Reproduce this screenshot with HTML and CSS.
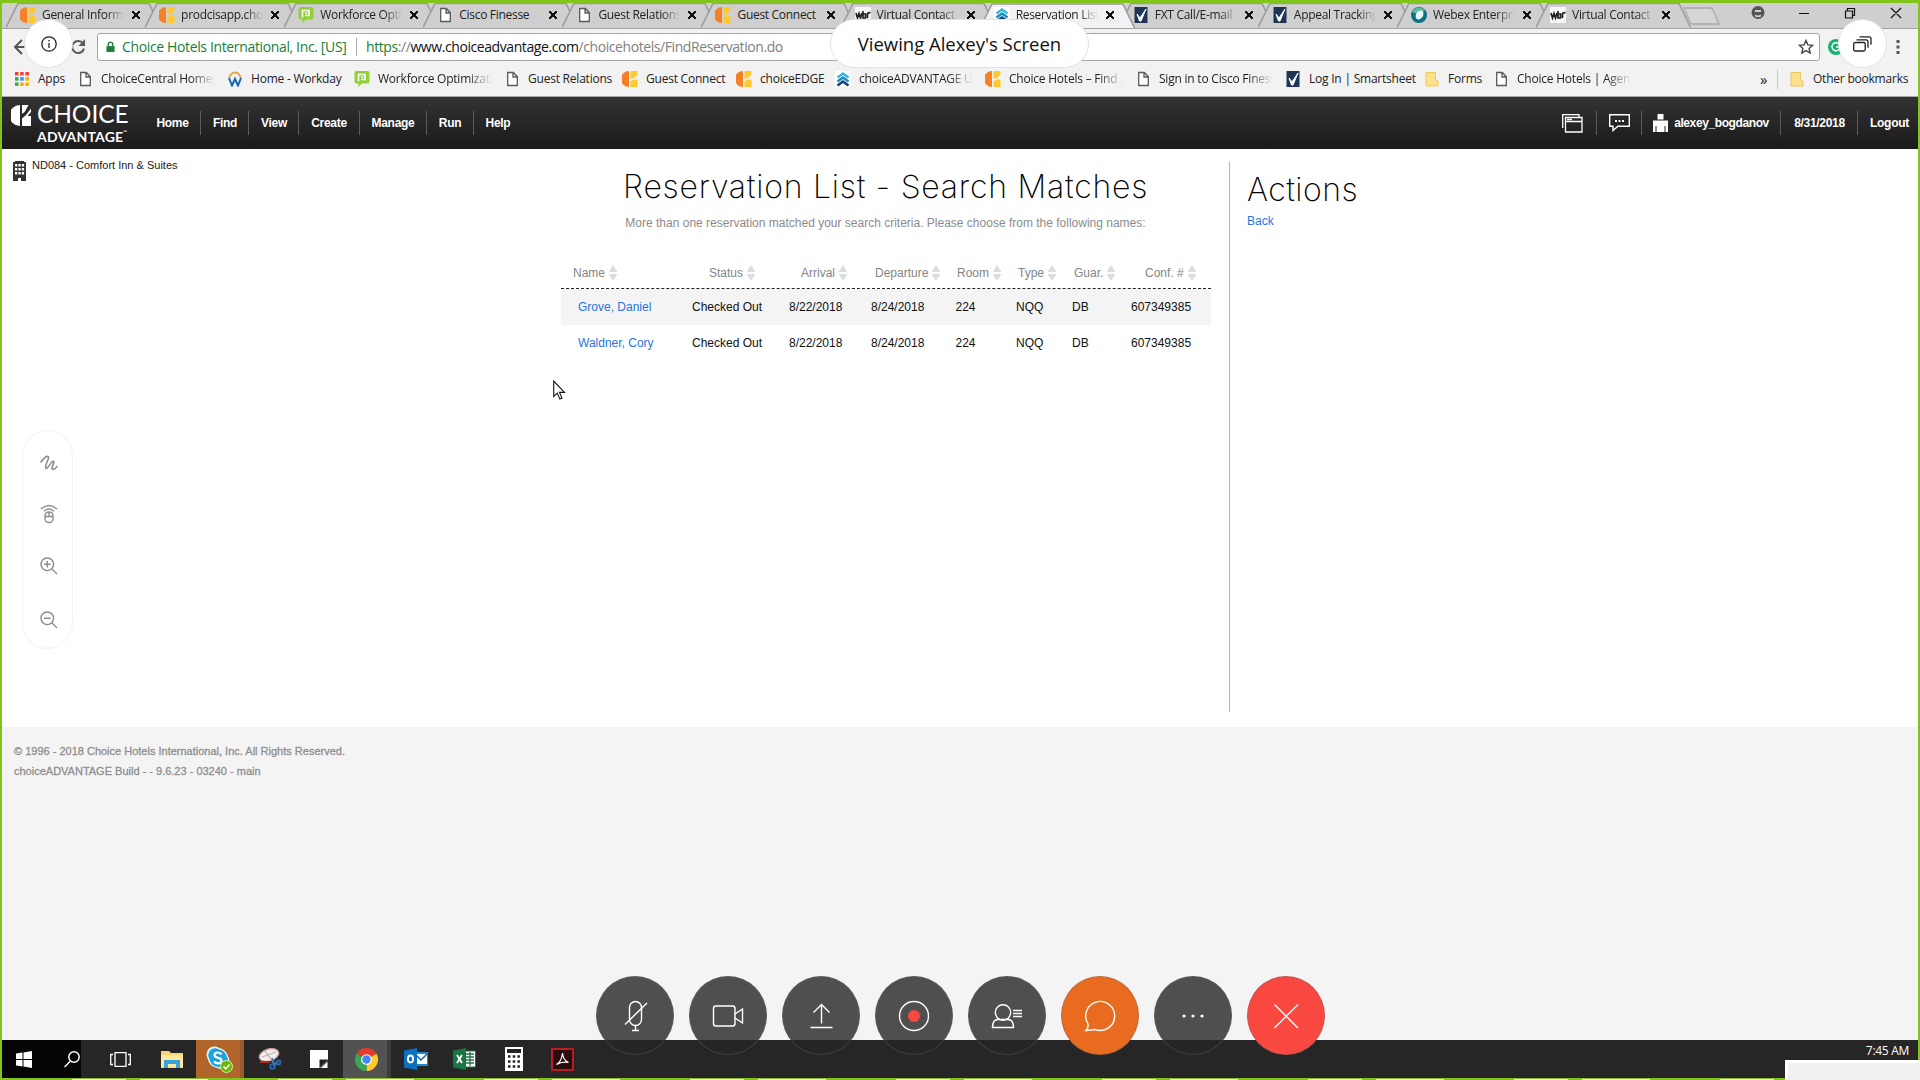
FILE: index.html
```html
<!DOCTYPE html>
<html lang="en">
<head>
<meta charset="utf-8">
<title>Reservation List</title>
<link rel="stylesheet" href="styles.css">
</head>
<body>
<svg class="defs" width="0" height="0" aria-hidden="true">
  <defs>
    <symbol id="choice" viewBox="0 0 16 16"><path d="M7 0A8 8 0 0 0 7 16Z" fill="#f58025"/><path d="M8.500 0H15.500V3.500L11.500 7.500H8.500ZM8.500 10.500 11 8.500H15.500V16H8.500Z" fill="#ffc82e"/></symbol>
    <symbol id="page" viewBox="0 0 16 16"><path d="M3.700 1.500h5.600l4 4v9H3.700ZM9 1.500V6h4.300" fill="#fff" stroke="#5a5a5a" stroke-width="1.300"/></symbol>
    <symbol id="wfo" viewBox="0 0 16 16"><path d="M2.500 0h11Q15.500 0 15.500 2v8.500q0 2-2 2H8L4 16l.5-3.500h-2q-2 0-2-2V2q0-2 2-2Z" fill="#92d038"/><path d="M4.500 10.500V3.500h6.500v5H7" fill="none" stroke="#fff" stroke-width="1.600"/><circle cx="8" cy="6" r="1" fill="#fff"/></symbol>
    <symbol id="wbr" viewBox="0 0 16 16"><path d="M0 0h16v16H0Z" fill="#f6f6f6"/><path d="m1 6 1.500 5L4 6.500 5.500 11 7 6M8 4v7h2.500V7H8M12.500 11V6.500q1-1 3-.8" fill="none" stroke="#222" stroke-width="1.700"/></symbol>
    <symbol id="adv" viewBox="0 0 16 16"><path d="M0 0h16v16H0Z" fill="#fff"/><g fill="none" stroke-width="2.600"><path d="m2.500 6.500 5.500-4 5.500 4" stroke="#36b8df"/><path d="m2.500 10.500 5.500-4 5.500 4" stroke="#178dc6"/><path d="m2.500 14.500 5.500-4 5.500 4" stroke="#193f7a"/></g></symbol>
    <symbol id="smart" viewBox="0 0 16 16"><path d="M1.500 0h13v16h-13Z" fill="#1f3556"/><path d="m4 7 3 4 6-9-5 12-1.500 0Z" fill="#fff" stroke="#fff"/></symbol>
    <symbol id="webex" viewBox="0 0 16 16"><circle cx="8" cy="8" r="8" fill="#0d6f86"/><path d="M1 5A8 8 0 0 1 14 3L9 8Z" fill="#5fb8a0"/><ellipse cx="8.500" cy="8" rx="3.500" ry="4.800" transform="rotate(35 8.500 8)" fill="#e6f7f8"/></symbol>
    <symbol id="workday" viewBox="0 0 16 16"><path d="M2.500 7a5.500 5.500 0 0 1 11 0" fill="none" stroke="#e8a33d" stroke-width="1.800"/><path d="m2 7 3 7.500L8 8l3 6.500L14 7" fill="none" stroke="#1667b0" stroke-width="2"/></symbol>
    <symbol id="apps" viewBox="0 0 16 16"><path d="M1 1h3.500v3.500H1ZM6.200 1h3.500v3.500H6.200ZM11.400 1h3.500v3.500h-3.500Z" fill="#ea4335"/><path d="M1 6.200h3.500v3.500H1Z" fill="#34a853"/><path d="M6.200 6.200h3.500v3.500H6.200Z" fill="#4285f4"/><path d="M11.400 6.200h3.500v3.500h-3.500ZM6.200 11.400h3.500v3.500H6.200ZM11.400 11.400h3.500v3.500h-3.500Z" fill="#f9ab00"/><path d="M1 11.400h3.500v3.500H1Z" fill="#34a853"/></symbol>
    <symbol id="folder" viewBox="0 0 16 16"><path d="M2 1.500h9.500V9l2.500 1v5H2Z" fill="#fce08b" stroke="#edc75f"/></symbol>
    <symbol id="tabshape" viewBox="0 0 155 25"><path d="M0 24.500 12 .5H143L154.500 24.500" stroke="#9c9c9c" stroke-width="1.600"/></symbol>
    <symbol id="sorter" viewBox="0 0 8 16"><path d="M4 0 8 6v1H0V6ZM0 9h8v1l-4 6-4-6Z" fill="#dcdddf"/></symbol>
  </defs>
</svg>

<div class="screen">
  <div class="tabs">
    <div class="tab"><svg class="shape"><use href="#tabshape"/></svg><svg class="fav"><use href="#choice"/></svg><span class="fade">General Information</span><b></b></div>
    <div class="tab"><svg class="shape"><use href="#tabshape"/></svg><svg class="fav"><use href="#choice"/></svg><span class="fade">prodcisapp.choice</span><b></b></div>
    <div class="tab"><svg class="shape"><use href="#tabshape"/></svg><svg class="fav"><use href="#wfo"/></svg><span class="fade">Workforce Optimiz</span><b></b></div>
    <div class="tab"><svg class="shape"><use href="#tabshape"/></svg><svg class="fav"><use href="#page"/></svg><span>Cisco Finesse</span><b></b></div>
    <div class="tab"><svg class="shape"><use href="#tabshape"/></svg><svg class="fav"><use href="#page"/></svg><span class="fade">Guest Relations</span><b></b></div>
    <div class="tab"><svg class="shape"><use href="#tabshape"/></svg><svg class="fav"><use href="#choice"/></svg><span>Guest Connect</span><b></b></div>
    <div class="tab"><svg class="shape"><use href="#tabshape"/></svg><svg class="fav"><use href="#wbr"/></svg><span class="fade">Virtual Contact</span><b></b></div>
    <div class="tab active"><svg class="shape"><use href="#tabshape"/></svg><svg class="fav"><use href="#adv"/></svg><span class="fade">Reservation List</span><b></b></div>
    <div class="tab"><svg class="shape"><use href="#tabshape"/></svg><svg class="fav"><use href="#smart"/></svg><span class="fade">FXT Call/E-mail</span><b></b></div>
    <div class="tab"><svg class="shape"><use href="#tabshape"/></svg><svg class="fav"><use href="#smart"/></svg><span class="fade">Appeal Tracking</span><b></b></div>
    <div class="tab"><svg class="shape"><use href="#tabshape"/></svg><svg class="fav"><use href="#webex"/></svg><span class="fade">Webex Enterprise</span><b></b></div>
    <div class="tab"><svg class="shape"><use href="#tabshape"/></svg><svg class="fav"><use href="#wbr"/></svg><span class="fade">Virtual Contact</span><b></b></div>
    <svg class="newtab" width="37" height="18" viewBox="0 0 37 18"><path d="M1 1h26q2 0 3 2l6 14H10q-2 0-3-2Z" fill="#d6d6d6" stroke="#a8a8a8" stroke-width="1.300"/></svg>
    <svg class="winctl" width="160" height="24" viewBox="0 0 160 24" fill="none" stroke="#111" stroke-width="1.200"><circle cx="8" cy="9.500" r="6.500" fill="#555" stroke="none"/><path d="M5 7h6v2H5Z" fill="#d0d0d0" stroke="none"/><path d="M5 12.500q3 1.500 6 0" stroke="#d0d0d0" stroke-width="1.500"/><path d="M49 10.500h10M95.500 8h7v7h-7ZM97.500 7.500V5.500h7v7h-2M141 5l10 10m0-10-10 10"/></svg>
  </div>

  <div class="toolbar">
    <svg class="back" width="16" height="16" viewBox="0 0 16 16"><path d="M8 1 1 8l7 7M1.500 8H15" fill="none" stroke="#555" stroke-width="2"/></svg>
    <svg class="reload" width="16" height="16" viewBox="0 0 16 16"><path d="M13 4.500A6 6 0 1 0 14 9.500" fill="none" stroke="#5a5a5a" stroke-width="2"/><path d="M15 0v7H8.500Z" fill="#5a5a5a"/></svg>
    <div class="address">
      <svg class="lock" width="9" height="12" viewBox="0 0 10 12"><path d="M.5 5h9v6.500h-9Z" fill="#188038"/><path d="M2.500 5V3a2.500 2.500 0 0 1 5 0v2" fill="none" stroke="#188038" stroke-width="1.500"/></svg>
      <span class="owner">Choice Hotels International, Inc. [US]</span>
      <span class="url"><span class="scheme">https</span><i>://</i>www.choiceadvantage.com<i>/choicehotels/FindReservation.do</i></span>
      <svg class="star" width="16" height="16" viewBox="0 0 16 16"><path d="m8 1.500 1.900 4.400 4.800.4-3.600 3.100 1.100 4.700L8 11.600l-4.200 2.500 1.100-4.700L1.300 6.300l4.800-.4Z" fill="none" stroke="#444" stroke-width="1.400"/></svg>
    </div>
    <svg class="ext" width="16" height="16" viewBox="0 0 16 16"><circle cx="8" cy="8" r="8" fill="#14b371"/><path d="M11 5a4 4 0 1 0 1 3H8" fill="none" stroke="#fff" stroke-width="1.500"/></svg>
    <svg class="kebab" width="4" height="14" viewBox="0 0 4 14"><path d="M.5 0h3v3h-3ZM.5 5.500h3v3h-3ZM.5 11h3v3h-3Z" fill="#555"/></svg>
  </div>

  <div class="bookmarks">
    <div><svg><use href="#apps"/></svg><span>Apps</span></div>
    <div><svg><use href="#page"/></svg><span class="fade">ChoiceCentral Homepage</span></div>
    <div><svg><use href="#workday"/></svg><span>Home - Workday</span></div>
    <div><svg><use href="#wfo"/></svg><span class="fade">Workforce Optimization</span></div>
    <div><svg><use href="#page"/></svg><span>Guest Relations</span></div>
    <div><svg><use href="#choice"/></svg><span>Guest Connect</span></div>
    <div><svg><use href="#choice"/></svg><span>choiceEDGE</span></div>
    <div><svg><use href="#adv"/></svg><span class="fade">choiceADVANTAGE Univ</span></div>
    <div><svg><use href="#choice"/></svg><span class="fade">Choice Hotels – Find a</span></div>
    <div><svg><use href="#page"/></svg><span class="fade">Sign in to Cisco Finesse</span></div>
    <div><svg><use href="#smart"/></svg><span>Log In | Smartsheet</span></div>
    <div><svg><use href="#folder"/></svg><span>Forms</span></div>
    <div><svg><use href="#page"/></svg><span class="fade">Choice Hotels | Agents</span></div>
    <div class="more">»</div>
    <div class="other"><svg><use href="#folder"/></svg><span>Other bookmarks</span></div>
  </div>

  <header class="nav">
    <div class="logo">
      <svg width="21" height="21" viewBox="0 0 21 21" fill="#fff"><path d="M9 0A10.500 10.500 0 0 0 9 21Z"/><path d="M11 0h6.500L14 6.500 11 9ZM20 3.500V7l-3.500 4H20v10h-9v-7.500l4-3.500Z"/></svg>
      <div><p class="l1">CHOICE</p><p class="l2">ADVANTAGE<small>™</small></p></div>
    </div>
    <nav><a>Home</a><a>Find</a><a>View</a><a>Create</a><a>Manage</a><a>Run</a><a>Help</a></nav>
    <div class="tools">
      <a><svg width="21" height="19" viewBox="0 0 21 19" fill="none" stroke="#fff" stroke-width="1.300"><path d="M3.500 3.500h16.500v14.500H3.500ZM3.500 7.500H20"/><path d="M.7 14V.7H17v2.500M5 5.500h5" /></svg></a>
      <a><svg width="21" height="18" viewBox="0 0 21 18" fill="none" stroke="#fff" stroke-width="1.400"><path d="M.7.7h19.600v11.600H9L4 16.500v-4.200H.7Z"/><path d="M6 7h2m1.500 0h2m1.500 0h2" stroke-width="2"/></svg></a>
      <a class="user"><svg width="15" height="18" viewBox="0 0 15 18" fill="#fff"><path d="M4.500 0h6v5.500h-6ZM0 6.500h15V18h-2.500v-6h-1v6H3.500v-6h-1v6H0Z"/></svg><span>alexey_bogdanov</span></a>
      <a>8/31/2018</a>
      <a>Logout</a>
    </div>
  </header>

  <main>
    <div class="property">
      <svg width="13" height="20" viewBox="0 0 13 20"><path d="M2 0h9v1h2v19H8v-3H5v3H0V1h2Z" fill="#333"/><path d="M2 3h2.300v2.500H2ZM5.400 3h2.300v2.500H5.400ZM8.800 3h2.300v2.500H8.800ZM2 7h2.300v2.500H2ZM5.400 7h2.300v2.500H5.400ZM8.800 7h2.300v2.500H8.800ZM2 11h2.300v2.500H2ZM5.400 11h2.300v2.500H5.400ZM8.800 11h2.300v2.500H8.800Z" fill="#fff"/></svg>
      <span>ND084 - Comfort Inn &amp; Suites</span>
    </div>
    <section class="list">
      <h1>Reservation List - Search Matches</h1>
      <p>More than one reservation matched your search criteria. Please choose from the following names:</p>
      <div class="row head">
        <span>Name<svg><use href="#sorter"/></svg></span><span>Status<svg><use href="#sorter"/></svg></span><span>Arrival<svg><use href="#sorter"/></svg></span><span>Departure<svg><use href="#sorter"/></svg></span><span>Room<svg><use href="#sorter"/></svg></span><span>Type<svg><use href="#sorter"/></svg></span><span>Guar.<svg><use href="#sorter"/></svg></span><span>Conf. #<svg><use href="#sorter"/></svg></span>
      </div>
      <div class="row odd"><a>Grove, Daniel</a><span>Checked Out</span><span>8/22/2018</span><span>8/24/2018</span><span>224</span><span>NQQ</span><span>DB</span><span>607349385</span></div>
      <div class="row"><a>Waldner, Cory</a><span>Checked Out</span><span>8/22/2018</span><span>8/24/2018</span><span>224</span><span>NQQ</span><span>DB</span><span>607349385</span></div>
    </section>
    <aside>
      <h2>Actions</h2>
      <a>Back</a>
    </aside>
  </main>

  <footer>
    <p>© 1996 - 2018 Choice Hotels International, Inc. All Rights Reserved.</p>
    <p>choiceADVANTAGE Build - - 9.6.23 - 03240 - main</p>
  </footer>

  <div class="taskbar">
    <div class="start">
      <svg width="16" height="17" viewBox="0 0 16 17" fill="#fff"><path d="m0 2.500 6.500-1v6.500H0ZM7.500 1.400 16 0v8H7.500ZM0 9h6.500v6.500L0 14.500ZM7.500 9H16v8l-8.500-1.400Z"/></svg>
      <svg width="16" height="17" viewBox="0 0 16 17" fill="none" stroke="#fff" stroke-width="1.500"><circle cx="10" cy="6" r="5.200"/><path d="M6.500 10 .5 16"/></svg>
    </div>
    <div><svg width="21" height="15" viewBox="0 0 21 15" fill="none" stroke="#fff" stroke-width="1.300"><path d="M5 .7h11v13.600H5ZM3 2.500H.7v10H3M18 2.500h2.300v10H18"/></svg></div>
    <div><svg width="22" height="19" viewBox="0 0 22 19"><path d="M0 1h8l2 2h12v15H0Z" fill="#f7d774"/><path d="M0 5h22v12H0Z" fill="#fde79a"/><path d="M3 18v-8h16v8h-4v-4H7v4Z" fill="#35a3dc"/></svg></div>
    <div class="skype"><svg width="27" height="27" viewBox="0 0 27 27"><circle cx="8.500" cy="8.500" r="8" fill="#e8f6fc"/><circle cx="15.500" cy="15" r="8" fill="#e8f6fc"/><circle cx="12" cy="12" r="10" fill="#e8f6fc"/><circle cx="9" cy="9" r="6.800" fill="#1ba4df"/><circle cx="15" cy="14.500" r="7" fill="#1ba4df"/><circle cx="12" cy="12" r="8.700" fill="#1ba4df"/><path d="M15.500 8.500q-1-2-3.500-2-3.500 0-3.500 2.600 0 2.200 3.500 2.800t3.500 2.800q0 2.600-3.500 2.600-3 0-3.700-2.200" fill="none" stroke="#fff" stroke-width="2.200"/><circle cx="20.500" cy="20.500" r="6" fill="#6bb700" stroke="#d8f0b0"/><path d="m17.500 20.500 2.200 2.300 4-4.300" fill="none" stroke="#fff" stroke-width="1.500"/></svg></div>
    <div><svg width="24" height="22" viewBox="0 0 24 22"><ellipse cx="11" cy="7" rx="10" ry="6" transform="rotate(-18 11 7)" fill="#eee" stroke="#c99" stroke-width="1.300"/><path d="M4 9 18 4M7 3l6 8" stroke="#caa" stroke-width="1.200"/><path d="M2 14h10" stroke="#b02a2a" stroke-width="2"/><path d="m14 10 2 7 4-4" fill="none" stroke="#4a7fb5" stroke-width="2"/><circle cx="14.500" cy="18.500" r="2.300" fill="none" stroke="#2a6ab0" stroke-width="1.800"/><circle cx="20.500" cy="14.500" r="2" fill="none" stroke="#2a6ab0" stroke-width="1.800"/></svg></div>
    <div><svg width="18" height="18" viewBox="0 0 18 18"><path d="M0 0h18v9.500L10 18H0Z" fill="#fff"/><path d="M9.500 9.500H18L9.500 18Z" fill="#222"/><path d="M17.500 11.500V18H11Z" fill="#fff"/></svg></div>
    <div class="chrome"><svg width="23" height="23" viewBox="0 0 24 24"><path d="M12 12 1.600 6A12 12 0 0 1 22.400 6Z" fill="#e53a2e"/><path d="M12 12 22.400 6A12 12 0 0 1 12 24Z" fill="#fdc92c"/><path d="M12 12 12 24A12 12 0 0 1 1.600 6Z" fill="#3aa757"/><circle cx="12" cy="12" r="5.600" fill="#fff"/><circle cx="12" cy="12" r="4.400" fill="#4285f4"/></svg></div>
    <div><svg width="24" height="22" viewBox="0 0 24 22"><path d="M9 4h15v14H9Z" fill="#1e88d2"/><path d="M12 6h11v10H12Z" fill="#fff"/><path d="m12 7 5 5 6-6" fill="none" stroke="#0a6ab6" stroke-width="1.500"/><path d="M0 2.500 13 0v22L0 19.500Z" fill="#0c6fc0"/><ellipse cx="6.500" cy="11" rx="2.600" ry="3.500" fill="none" stroke="#fff" stroke-width="1.800"/></svg></div>
    <div><svg width="24" height="22" viewBox="0 0 24 22"><path d="M11 3h11.500v16H11Z" fill="#fff" stroke="#1f7145"/><path d="M13 6h8M13 9h8M13 12h8M13 15h8M17 4v14" stroke="#1f7145" stroke-width="1.300"/><path d="M0 2.500 13 0v22L0 19.500Z" fill="#1b7444"/><path d="m4 7 5 8m0-8-5 8" stroke="#fff" stroke-width="1.800"/></svg></div>
    <div><svg width="18" height="24" viewBox="0 0 18 24"><path d="M0 0h18v24H0Z" fill="#fff"/><path d="M2 2h14v4H2Z" fill="#222"/><path d="M3 9.500h12M3 14.500h12M3 19.500h12" stroke="#222" stroke-width="2.500" stroke-dasharray="2.500 2.200"/></svg></div>
    <div><svg width="23" height="23" viewBox="0 0 23 23"><path d="M1 1h21v21H1Z" fill="#2b0b0b" stroke="#b81c24" stroke-width="2"/><path d="M5.500 16.500q5-2.500 6-11.500Q12 12 17.500 14.500q-6-1.500-12 2Z" fill="none" stroke="#fff" stroke-width="1.200"/></svg></div>
    <time>7:45 AM</time>
  </div>
  <div class="edge"></div>
</div>

<div class="corner"></div>

<svg class="cursor" width="13" height="20" viewBox="0 0 13 20"><path d="M.7 1v15.500l3.600-3.400 2.500 6 2.200-1-2.500-5.700h5Z" fill="#fff" stroke="#112" stroke-width="1.100"/></svg>

<div class="bubble info"><svg width="16" height="16" viewBox="0 0 16 16" fill="none" stroke="#222" stroke-width="1.300"><circle cx="8" cy="8" r="7.200"/><path d="M8 7v5M8 4v1.500"/></svg></div>
<div class="bubble viewing">Viewing Alexey's Screen</div>
<div class="bubble windows"><svg width="19" height="16" viewBox="0 0 19 16" fill="none" stroke="#222" stroke-width="1.300"><rect x=".7" y="6.500" width="11.500" height="8.500" rx="1.500"/><path d="M3.500 3.800h9.500q2 0 2 2v6M6.500.8h9.500q2 0 2 2v6"/></svg></div>

<div class="sidebar">
  <svg width="18" height="16" viewBox="0 0 18 16"><path d="M1 7C4 3 6.500 1 8 1.500c2.500 1-4 9-2.200 11.500C7.500 15.500 11 5.500 13.500 6.200c2 .6-3 6.500-1.300 7.800 1.400 1 3.500-.8 4.800-2.500" fill="none" stroke="#8d8d8d" stroke-width="1.600" stroke-linecap="round"/></svg>
  <svg width="18" height="20" viewBox="0 0 18 20" fill="none" stroke="#8d8d8d" stroke-width="1.400"><path d="M1 5q8-7 16 0M3.800 7.300q5.200-4.600 10.400 0"/><rect x="5" y="8" width="8" height="10.500" rx="3.800"/><path d="M5 12.500h8M9 8v4.500"/></svg>
  <svg width="18" height="18" viewBox="0 0 18 18" fill="none" stroke="#8d8d8d" stroke-width="1.400"><circle cx="7.300" cy="7.300" r="6.300"/><path d="m12 12 5 5M4 7.300h6.600M7.300 4v6.600"/></svg>
  <svg width="18" height="18" viewBox="0 0 18 18" fill="none" stroke="#8d8d8d" stroke-width="1.400"><circle cx="7.300" cy="7.300" r="6.300"/><path d="m12 12 5 5M4 7.300h6.600"/></svg>
</div>

<div class="controls">
  <div><svg viewBox="0 0 40 40"><rect x="14.500" y="5.500" width="12" height="24" rx="6"/><path d="M10 28.500 32 7M20.500 30v4.500M17 34.500h7"/></svg></div>
  <div><svg viewBox="0 0 40 40"><rect x="5.500" y="10" width="21.500" height="20" rx="2.500"/><path d="m27 18 7.500-5v14L27 22"/></svg></div>
  <div><svg viewBox="0 0 40 40"><path d="M20.500 27.500V9M12.500 16.500l8-8 8 8M9.500 31.500h22"/></svg></div>
  <div><svg viewBox="0 0 40 40"><circle cx="20" cy="20" r="14.500"/><circle cx="20" cy="20" r="6" class="dot"/></svg></div>
  <div><svg viewBox="0 0 40 40"><circle cx="16" cy="16.500" r="7.700"/><path d="M5.500 31.500q0-8 5.500-8h10q5.500 0 5.500 8ZM26 14.500h9M26 17.500h9M26 20.500h9"/></svg></div>
  <div class="orange"><svg viewBox="0 0 40 40"><path d="M7.800 27.500A14.500 14.500 0 1 1 15 33.500L6 34.500Q9 31 7.800 27.500Z"/></svg></div>
  <div><svg viewBox="0 0 40 40"><g fill="#fff" stroke="none"><circle cx="11" cy="20" r="1.600"/><circle cx="20" cy="20" r="1.600"/><circle cx="29" cy="20" r="1.600"/></g></svg></div>
  <div class="red"><svg viewBox="0 0 40 40"><path d="m8.500 8.500 23.500 23.500m0-23.500L8.500 32"/></svg></div>
</div>
</body>
</html>
```
FILE: styles.css
```css
* { box-sizing: border-box; }
body { margin: 0; width: 1920px; height: 1080px; overflow: hidden; position: relative; background: #fff; font: 12px "Liberation Sans", Arial, sans-serif; }
p, h1, h2 { margin: 0; }
svg { display: block; flex: none; }
.defs { position: absolute; }

.screen { width: 1920px; height: 1080px; display: flex; flex-direction: column; border: solid #80c41c; border-width: 3px 2px 0; }

/* browser tabs */
.tabs { height: 26px; flex: none; display: flex; background: #cfcfcf; padding-left: 4px; border-bottom: 1px solid #a2a2a2; font: 12px "Open Sans", sans-serif; color: #222; position: relative; }
.tab { width: 139.1px; flex: none; height: 26px; display: flex; align-items: center; padding: 0 0 3px 14px; position: relative; }
.tab .shape { position: absolute; left: 0; top: 0; width: 155px; height: 25px; fill: #cfcfcf; }
.tab.active { z-index: 2; }
.tab.active .shape { fill: #f2f2f2; height: 26px; }
.tab .fav { width: 16px; height: 16px; position: relative; }
.tab span { position: relative; margin-left: 6px; width: 82px; overflow: hidden; white-space: nowrap; letter-spacing: -.3px; }
.fade { -webkit-mask-image: linear-gradient(90deg, #000 78%, transparent); mask-image: linear-gradient(90deg, #000 78%, transparent); }
.tab b { position: relative; width: 8px; height: 8px; margin-left: 8px; background: linear-gradient(45deg, transparent 42%, #111 42% 58%, transparent 58%), linear-gradient(-45deg, transparent 42%, #111 42% 58%, transparent 58%); }
.newtab { margin: 4px 0 0 8px; position: relative; }
.winctl { margin-left: 30px; }

/* address row */
.toolbar { height: 35px; flex: none; display: flex; align-items: center; background: #f2f2f2; padding-left: 12px; }
.reload { margin-left: 40px; }
.address { margin-left: 11px; width: 1723px; height: 28px; display: flex; align-items: center; background: #fff; border: 1px solid #a5a5a5; border-radius: 3px; padding: 0 5px 0 8px; font: 14px "Open Sans", sans-serif; white-space: nowrap; }
.owner { margin-left: 7px; color: #188038; width: 235px; border-right: 1px solid #aaa; line-height: 18px; letter-spacing: -.36px; }
.url { margin-left: 9px; color: #111; letter-spacing: -.42px; }
.url i { font-style: normal; color: #808080; }
.scheme { color: #188038; }
.star { margin-left: auto; }
.ext { margin-left: 8px; }
.kebab { margin-left: 52px; }

/* bookmarks */
.bookmarks { height: 33px; flex: none; display: flex; align-items: center; background: #f2f2f2; padding: 0 0 3px 12px; border-bottom: 1px solid #aaa; font: 12px "Open Sans", sans-serif; color: #222; letter-spacing: -.22px; white-space: nowrap; }
.bookmarks div { display: flex; align-items: center; width: 150px; flex: none; }
.bookmarks svg { width: 16px; height: 16px; margin-right: 8px; }
.bookmarks .fade { width: 114px; overflow: hidden; }
.bookmarks div:nth-child(1) { width: 63px; }
.bookmarks div:nth-child(3) { width: 127px; }
.bookmarks div:nth-child(5) { width: 118px; }
.bookmarks div:nth-child(6) { width: 114px; }
.bookmarks div:nth-child(7) { width: 99px; }
.bookmarks div:nth-child(11) { width: 139px; }
.bookmarks div:nth-child(12) { width: 69px; }
.bookmarks div:nth-child(13) { width: 267px; }
.bookmarks .more { width: 18px; height: 20px; border-right: 1px solid #ccc; font-size: 15px; line-height: 18px; }
.bookmarks .other { margin-left: 11px; width: auto; }

/* application header */
.nav { height: 52px; flex: none; display: flex; background: linear-gradient(#333, #1a1a1a); color: #fff; font-weight: bold; font-size: 12px; letter-spacing: -.3px; padding: 0 0 0 9px; }
.logo { display: flex; width: 134px; padding-top: 8px; }
.logo div { margin: -3px 0 0 5px; }
.logo p { font-family: Lato, sans-serif; white-space: nowrap; }
.l1 { font-size: 24.500px; line-height: 24px; font-weight: 400; letter-spacing: -.1px; }
.l2 { font-size: 14px; line-height: 21px; letter-spacing: .2px; display: flex; }
.l2 small { font-size: 5px; line-height: 12px; }
.nav nav { display: flex; }
.nav a { display: flex; align-items: center; justify-content: center; height: 24px; margin-top: 14px; border-right: 1px solid #5c5c5c; }
.nav nav a:nth-child(1) { width: 56px; }
.nav nav a:nth-child(2) { width: 48px; padding-left: 1px; }
.nav nav a:nth-child(3) { width: 50px; padding-left: 1px; }
.nav nav a:nth-child(4) { width: 61px; }
.nav nav a:nth-child(5) { width: 67px; }
.nav nav a:nth-child(6) { width: 47px; }
.nav nav a:last-child { width: 48px; border: 0; }
.tools { margin-left: auto; display: flex; width: 369px; }
.tools a:nth-child(1) { width: 48px; }
.tools a:nth-child(2) { width: 45px; }
.tools .user { width: 139px; letter-spacing: -.4px; }
.tools .user span { margin-left: 6px; }
.tools a:nth-child(4) { width: 77px; padding-left: 1px; }
.tools a:nth-child(5) { width: 60px; border: 0; padding-left: 3px; }

/* page */
main { height: 578px; flex: none; display: flex; background: #fff; }
.property { width: 559px; display: flex; padding: 11px 0 0 11px; font-size: 11px; line-height: 11px; color: #222; }
.property svg { margin-top: 1px; }
.property span { margin-left: 6px; }
.list { width: 650px; }
.list h1 { font: 200 32px/36px Inter, sans-serif; margin: 20px 0 0 62px; letter-spacing: .77px; color: #000; white-space: nowrap; }
.list p { color: #8b8b8b; text-align: center; margin: 11px 1px 0 0; line-height: 14px; }
.row { height: 36px; display: grid; grid-template-columns: 114px 97px 82px 84.500px 60.500px 56px 59px 1fr; padding-left: 17px; align-items: center; color: #111; }
.row a, aside a { color: #2a74e0; }
.row.odd { background: #f4f4f4; }
.row.head { height: 33px; margin-top: 26px; border-bottom: 1px dashed #222; color: #858585; grid-template-columns: 136px 92px 74px 82px 61px 56px 71px 1fr; padding: 1px 0 0 12px; }
.head span { display: flex; align-items: center; white-space: nowrap; }
.head svg { width: 8px; height: 16px; margin-left: 4px; }
aside { margin: 13px 0 0 18px; height: 550px; border-left: 1px solid #b5b5b5; padding-left: 17px; }
aside h2 { font: 200 32px/36px Inter, sans-serif; margin: 10px 0 6px; color: #000; letter-spacing: .5px; }
aside a { line-height: 15px; display: block; margin-top: 6px; }

footer { flex: 1; background: #f4f4f4; padding: 14px 0 0 12px; font-size: 11px; line-height: 20px; color: #8f8f8f; -webkit-text-stroke: .3px #8f8f8f; }

/* taskbar */
.taskbar { height: 38px; flex: none; display: flex; background: #262626; }
.taskbar div { width: 49px; display: flex; align-items: center; justify-content: center; }
.taskbar .start { width: 79px; background: #050505; justify-content: space-between; padding: 0 1px 0 14px; }
.taskbar div:nth-child(2) { width: 76px; padding-left: 2px; margin-right: -10px; }
.taskbar div:nth-child(3) { width: 49px; margin-right: 0; }
.taskbar .skype { width: 48px; background: #b1652b; border-right: 4px solid #9c5a28; padding-left: 3px; }
.taskbar div:nth-child(5) { width: 51px; }
.taskbar div:nth-child(6) { width: 48px; }
.taskbar .chrome { width: 48px; background: #525252; border-right: 4px solid #3d3d3d; padding-left: 3px; }
.taskbar time { margin: 2px 9px 0 auto; color: #fff; font: 12px/17px "Open Sans", sans-serif; letter-spacing: -.3px; }
.edge { height: 2px; flex: none; background: linear-gradient(#80c41c 1px, transparent 1px), repeating-linear-gradient(90deg, #80c41c 0 70px, #fff 70px 124px, #80c41c 124px 138px, #fff 138px 206px); }
.corner { position: absolute; right: 0; bottom: 0; width: 135px; height: 20px; background: #f0f0f0; border: solid #fff; border-width: 3px 0 0 3px; }

/* meeting overlays */
.cursor { position: absolute; left: 553px; top: 380px; }
.bubble { position: absolute; z-index: 5; top: 19px; height: 49px; background: #fff; border: 1px solid #e2e2e2; border-radius: 25px; display: flex; align-items: center; justify-content: center; }
.info { left: 24px; width: 49px; }
.viewing { left: 830px; width: 259px; color: #111; font: 18.500px "Open Sans", sans-serif; letter-spacing: -.02px; }
.windows { left: 1838px; width: 49px; }
.sidebar { position: absolute; left: 22px; top: 430px; width: 51px; height: 219px; border: 1.500px solid #f2f2f2; border-radius: 26px; background: #fff; display: flex; flex-direction: column; align-items: center; padding: 24px 0 0 2px; }
.sidebar svg:nth-child(2) { margin-top: 33px; }
.sidebar svg:nth-child(3) { margin-top: 33px; }
.sidebar svg:nth-child(4) { margin-top: 36px; }
.controls { position: absolute; left: 595.500px; top: 976px; display: flex; gap: 15px; }
.controls div { width: 78px; height: 79px; border-radius: 50%; background: rgba(38,38,38,.8); border: 1px solid rgba(110,110,110,.35); display: flex; align-items: center; justify-content: center; }
.controls svg { width: 40px; height: 40px; fill: none; stroke: #fff; stroke-width: 1.400; }
.controls .dot { fill: #f8483f; stroke: none; }
.controls .orange { background: #e96b20; }
.controls .red { background: #f8483f; }
```
